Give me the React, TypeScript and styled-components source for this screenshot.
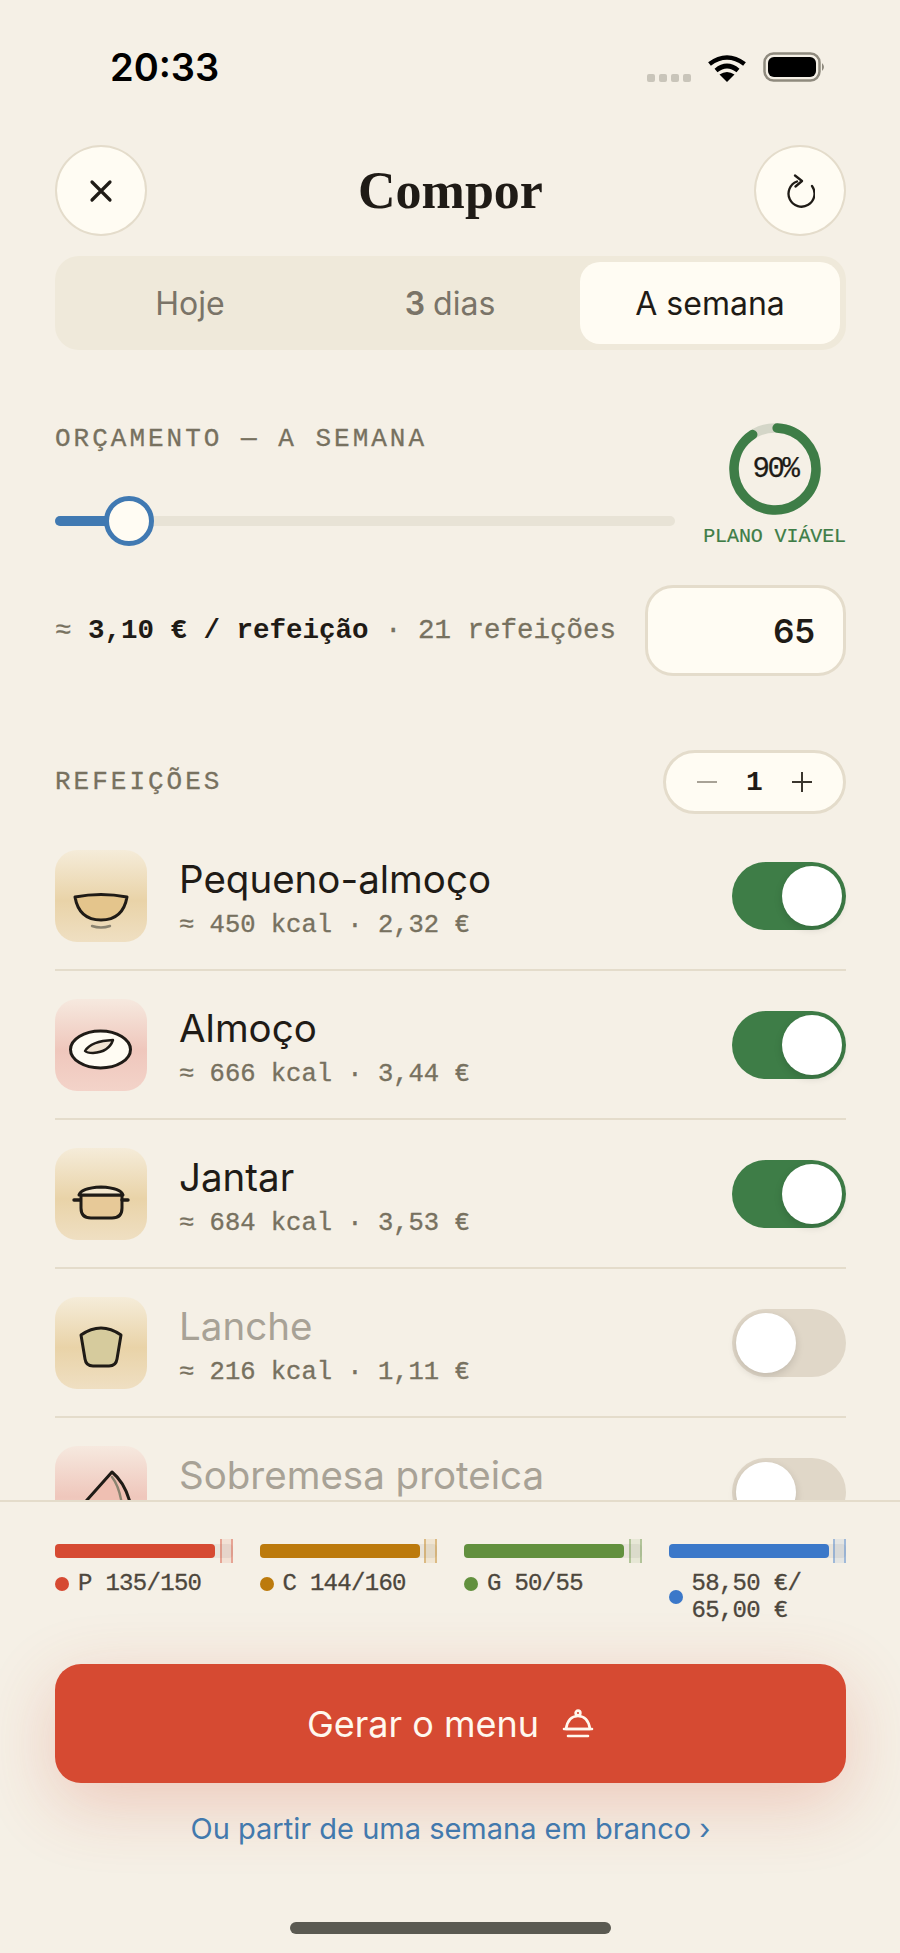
import React from "react";
import styled, { createGlobalStyle } from "styled-components";

const mono = `"Liberation Mono", "DejaVu Sans Mono", monospace`;
const sans = `Inter, "Noto Sans", sans-serif`;

const GlobalStyle = createGlobalStyle`
  html, body {
    margin: 0;
    padding: 0;
    background: #f5f0e6;
  }
  * {
    box-sizing: border-box;
  }
`;

const Screen = styled.div`
  display: flex;
  flex-direction: column;
  width: 900px;
  height: 1953px;
  overflow: hidden;
  background: #f5f0e6;
  font-family: ${sans};
  color: #1f1b16;
`;

const Scroll = styled.div`
  flex: 1;
  min-height: 0;
  overflow: hidden;
  padding: 0 54px 0 55px;
`;

const StatusBar = styled.div`
  display: flex;
  align-items: center;
  justify-content: space-between;
  height: 132px;
  padding: 2px 20px 0 55px;
`;

const Clock = styled.div`
  font-size: 38px;
  font-weight: 600;
  color: #000;
`;

const StatusIcons = styled.div`
  display: flex;
  align-items: flex-end;
  gap: 17px;
`;

const Header = styled.div`
  display: flex;
  align-items: center;
  justify-content: space-between;
  margin-top: 13px;
`;

const RoundButton = styled.div`
  display: flex;
  align-items: center;
  justify-content: center;
  width: 92px;
  height: 91px;
  border-radius: 50%;
  background: #fffcf3;
  border: 2px solid #e4dccb;
`;

const Title = styled.h1`
  margin: 0;
  font-family: "Liberation Serif", serif;
  font-size: 52px;
  font-weight: 700;
  color: #1f1b16;
`;

const Segments = styled.div`
  display: grid;
  grid-template-columns: 1fr 1fr 260px;
  height: 94px;
  margin-top: 20px;
  padding: 6px 6px 6px 5px;
  border-radius: 24px;
  background: #efe9da;
`;

const Segment = styled.div<{ $active?: boolean }>`
  display: flex;
  align-items: center;
  justify-content: center;
  border-radius: 20px;
  font-size: 32px;
  background: ${(p) => (p.$active ? "#fffcf3" : "transparent")};
  color: ${(p) => (p.$active ? "#1f1b16" : "#7a7468")};
  b {
    font-weight: 600;
    margin-right: 8px;
  }
`;

const Budget = styled.div`
  display: grid;
  grid-template-columns: 620px 1fr;
  margin-top: 76px;
`;

const BudgetLeft = styled.div`
  display: flex;
  flex-direction: column;
`;

const Label = styled.div`
  font-family: ${mono};
  font-size: 26px;
  line-height: 26px;
  letter-spacing: 3px;
  color: #77715f;
  -webkit-text-stroke: 0.3px #77715f;
`;

const Slider = styled.div`
  position: relative;
  height: 10px;
  margin-top: 64px;
  border-radius: 5px;
  background: #e8e3d6;
`;

const SliderFill = styled.div`
  width: 72px;
  height: 100%;
  border-radius: 5px 0 0 5px;
  background: #4079b2;
`;

const SliderThumb = styled.div`
  position: absolute;
  left: 49px;
  top: -20px;
  width: 50px;
  height: 50px;
  border-radius: 50%;
  background: #fffcf3;
  border: 5px solid #4079b2;
`;

const Gauge = styled.div`
  display: flex;
  flex-direction: column;
  align-items: flex-end;
  margin-top: -3px;
`;

const Ring = styled.div`
  position: relative;
  display: flex;
  align-items: center;
  justify-content: center;
  width: 92px;
  height: 92px;
  margin-right: 25px;
  font-family: ${mono};
  font-size: 29px;
  letter-spacing: -2.4px;
  color: #1f1b16;
  -webkit-text-stroke: 0.25px #1f1b16;
  svg {
    position: absolute;
    inset: 0;
  }
`;

const GaugeLabel = styled.div`
  margin-top: 10px;
  font-family: ${mono};
  font-size: 20px;
  letter-spacing: -0.1px;
  white-space: nowrap;
  color: #3e7d47;
  -webkit-text-stroke: 0.2px #3e7d47;
`;

const PriceRow = styled.div`
  display: flex;
  align-items: center;
  justify-content: space-between;
  margin-top: 37px;
`;

const PriceText = styled.div`
  font-family: ${mono};
  font-size: 27.5px;
  color: #77715f;
  white-space: nowrap;
  -webkit-text-stroke: 0.3px #77715f;
  b {
    color: #1f1b16;
    -webkit-text-stroke: 0;
  }
`;

const Amount = styled.div`
  display: flex;
  align-items: center;
  justify-content: flex-end;
  width: 201px;
  height: 91px;
  padding-right: 28px;
  border-radius: 28px;
  border: 3px solid #e4dccb;
  background: #fffcf3;
  font-size: 33px;
  font-weight: 600;
`;

const MealsHead = styled.div`
  display: flex;
  align-items: center;
  justify-content: space-between;
  margin-top: 74px;
`;

const Stepper = styled.div`
  display: flex;
  align-items: center;
  justify-content: space-between;
  width: 183px;
  height: 64px;
  padding: 0 31px;
  border-radius: 32px;
  border: 3px solid #e4dccb;
  background: #fffcf3;
  font-family: ${mono};
  font-size: 28px;
  font-weight: 700;
`;

const Meals = styled.div`
  margin-top: 8px;
`;

const Meal = styled.div`
  display: flex;
  align-items: center;
  height: 149px;
  padding: 28px 0 27px;
  border-bottom: 2px solid #e4dccb;
`;

const Tile = styled.div<{ $tone: "sand" | "rose" }>`
  display: flex;
  flex: none;
  width: 92px;
  height: 92px;
  border-radius: 22px;
  background: ${(p) =>
    p.$tone === "rose"
      ? "linear-gradient(180deg, #f6e9df 0%, #efc7bc 55%, #f3d3c9 100%)"
      : "linear-gradient(180deg, #f5ecd9 0%, #e9d3a8 55%, #efdfc2 100%)"};
`;

const MealText = styled.div`
  flex: 1;
  margin: 10px 0 0 32px;
`;

const MealName = styled.div<{ $off?: boolean }>`
  font-size: 38.5px;
  line-height: 46px;
  color: ${(p) => (p.$off ? "#a8a296" : "#1f1b16")};
`;

const MealMeta = styled.div`
  padding-top: 4px;
  font-family: ${mono};
  font-size: 25.5px;
  line-height: 40px;
  color: #77715f;
  -webkit-text-stroke: 0.35px #77715f;
`;

const Toggle = styled.div<{ $on?: boolean }>`
  display: flex;
  align-items: center;
  justify-content: ${(p) => (p.$on ? "flex-end" : "flex-start")};
  flex: none;
  width: 114px;
  height: 68px;
  padding: 0 4px;
  border-radius: 34px;
  background: ${(p) => (p.$on ? "#3e7d47" : "#e0d7c8")};
`;

const Knob = styled.div`
  width: 60px;
  height: 60px;
  border-radius: 50%;
  background: #fff;
  box-shadow: 0 3px 8px rgba(0, 0, 0, 0.14);
`;

const Footer = styled.div`
  flex: none;
  height: 453px;
  padding: 37px 54px 0 55px;
  border-top: 2px solid #e4dccb;
  background: #f5f0e6;
`;

const Macros = styled.div`
  display: grid;
  grid-template-columns: repeat(4, 1fr);
  gap: 27px;
`;

const MacroBar = styled.div`
  display: flex;
  align-items: center;
  height: 24px;
`;

const BarTrack = styled.div`
  position: relative;
  flex: 1;
  height: 14px;
  border-radius: 4px;
  background: rgba(0, 0, 0, 0.05);
`;

const BarFill = styled.div<{ $color: string }>`
  width: 160px;
  height: 100%;
  border-radius: 4px;
  background: ${(p) => p.$color};
`;

const BarTarget = styled.div<{ $color: string }>`
  position: absolute;
  right: 0;
  top: -5px;
  width: 13px;
  height: 24px;
  opacity: 0.45;
  background: ${(p) => p.$color}33;
  border-left: 2px solid ${(p) => p.$color};
  border-right: 2px solid ${(p) => p.$color};
`;

const Legend = styled.div`
  display: flex;
  align-items: center;
  gap: 9px;
  margin-top: 7px;
  font-family: ${mono};
  font-size: 24px;
  line-height: 27px;
  letter-spacing: -0.7px;
  color: #4d473d;
  -webkit-text-stroke: 0.3px #4d473d;
`;

const Dot = styled.span<{ $color: string }>`
  flex: none;
  width: 14px;
  height: 14px;
  border-radius: 50%;
  background: ${(p) => p.$color};
`;

const Cta = styled.div`
  display: flex;
  align-items: center;
  justify-content: center;
  gap: 23px;
  height: 119px;
  margin-top: 40px;
  border-radius: 26px;
  background: #d64a32;
  color: #fff8ee;
  font-size: 36px;
  box-shadow: 0 20px 70px rgba(214, 74, 50, 0.24);
`;

const BlankLink = styled.div`
  margin-top: 28px;
  text-align: center;
  font-size: 29px;
  color: #4279ad;
`;

const HomeBar = styled.div`
  width: 321px;
  height: 12px;
  margin: 76px auto 0;
  border-radius: 6px;
  background: #5b5a52;
`;

// tile drawings share one 92x92 box, so their coordinates read as offsets in the tile
const TileArt: React.FC<{ children: React.ReactNode }> = ({ children }) => (
  <svg width="92" height="92" viewBox="0 0 92 92" fill="none" stroke="#1f1b16" strokeWidth="3" strokeLinecap="round" strokeLinejoin="round">
    {children}
  </svg>
);

const Bowl = () => (
  <TileArt>
    <path d="M20 47 Q46 42 72 47 Q68 70 46 70 Q24 70 20 47Z" fill="#e4c58c" />
    <path d="M37 76 Q46 79 55 76" stroke="#8a8370" strokeWidth="2.4" />
  </TileArt>
);

const Plate = () => (
  <TileArt>
    <ellipse cx="45.5" cy="50.5" rx="30" ry="18.5" fill="#fffcf3" />
    <path d="M30 52 Q36 42 58 41 Q54 53 38 54 Q32 54 30 52Z" fill="#f2e4d2" strokeWidth="2.4" />
  </TileArt>
);

const Pot = () => (
  <TileArt>
    <path d="M26 47 V60 Q26 70 36 70 H57 Q67 70 67 60 V47Z" fill="#e7c998" />
    <path d="M24 47 Q26 40 46 39 Q66 40 68 47Z" fill="#f3e7cf" />
    <path d="M19 52 H25 M67 52 H73" strokeWidth="3.4" />
  </TileArt>
);

const Cup = () => (
  <TileArt>
    <path d="M26 38 Q46 24 66 38 L62 62 Q61 69 54 69 H38 Q31 69 30 62Z" fill="#d6cb9d" />
  </TileArt>
);

const Slice = () => (
  <TileArt>
    <path d="M16 72 L57 26 Q74 40 78 72Z" fill="#efbfb2" />
    <path d="M57 31 Q67 44 68 72" stroke="#8a8370" strokeWidth="2.4" />
  </TileArt>
);

const meals = [
  { name: "Pequeno-almoço", meta: "≈ 450 kcal · 2,32 €", tone: "sand", icon: <Bowl />, on: true },
  { name: "Almoço", meta: "≈ 666 kcal · 3,44 €", tone: "rose", icon: <Plate />, on: true },
  { name: "Jantar", meta: "≈ 684 kcal · 3,53 €", tone: "sand", icon: <Pot />, on: true },
  { name: "Lanche", meta: "≈ 216 kcal · 1,11 €", tone: "sand", icon: <Cup />, on: false },
  { name: "Sobremesa proteica", meta: "", tone: "rose", icon: <Slice />, on: false },
] as const;

const macros = [
  { label: "P 135/150", color: "#d64a32" },
  { label: "C 144/160", color: "#bc7a0c" },
  { label: "G 50/55", color: "#62903e" },
  { label: "58,50 €/ 65,00 €", color: "#3b78c9" },
];

const App: React.FC = () => {
  return (
    <Screen>
      <GlobalStyle />
      <Scroll>
        <StatusBar>
          <Clock>20:33</Clock>
          <StatusIcons>
            <svg width="44" height="8" viewBox="0 0 44 8" fill="#c9c5ba">
              <rect x="0" y="0" width="8" height="8" rx="2" />
              <rect x="12" y="0" width="8" height="8" rx="2" />
              <rect x="24" y="0" width="8" height="8" rx="2" />
              <rect x="36" y="0" width="8" height="8" rx="2" />
            </svg>
            <svg width="38" height="28" viewBox="0 0 38 28" fill="none" stroke="#000" strokeWidth="4.6">
              <path d="M1.5 10 Q19 -3 36.5 10" />
              <path d="M8 16.5 Q19 7.5 30 16.5" />
              <path d="M19 28 L11.5 20.5 Q19 15.5 26.5 20.5Z" fill="#000" stroke="none" />
            </svg>
            <svg width="63" height="30" viewBox="0 0 63 30" fill="none">
              <rect x="1.5" y="1.5" width="55" height="27" rx="9" stroke="#8f8a7e" strokeWidth="2.5" />
              <rect x="5" y="5" width="48" height="20" rx="6" fill="#000" />
              <path d="M59 11 Q63 15 59 19Z" fill="#8f8a7e" />
            </svg>
          </StatusIcons>
        </StatusBar>

        <Header>
          <RoundButton>
            <svg width="24" height="24" viewBox="0 0 24 24" stroke="#1f1b16" strokeWidth="3.2" strokeLinecap="round">
              <path d="M3 3 L21 21 M21 3 L3 21" />
            </svg>
          </RoundButton>
          <Title>Compor</Title>
          <RoundButton>
            <svg width="30" height="34" viewBox="0 0 30 34" fill="none" stroke="#1f1b16" strokeWidth="2.3" strokeLinecap="round" strokeLinejoin="round">
              <path d="M12 7.5 A13 13 0 1 0 27 12" />
              <path d="M10 1.5 L17 7 L10.5 12.5" />
            </svg>
          </RoundButton>
        </Header>

        <Segments>
          <Segment>Hoje</Segment>
          <Segment>
            <b>3</b>dias
          </Segment>
          <Segment $active>A semana</Segment>
        </Segments>

        <Budget>
          <BudgetLeft>
            <Label>ORÇAMENTO — A SEMANA</Label>
            <Slider>
              <SliderFill />
              <SliderThumb />
            </Slider>
          </BudgetLeft>
          <Gauge>
            <Ring>
              <svg width="92" height="92" viewBox="0 0 92 92" fill="none" strokeWidth="9.5">
                <circle cx="46" cy="46" r="41" stroke="#d4d6c8" />
                <circle
                  cx="46"
                  cy="46"
                  r="41"
                  stroke="#3e7d47"
                  strokeLinecap="round"
                  pathLength="100"
                  strokeDasharray="90 100"
                  transform="rotate(-87 46 46)"
                />
              </svg>
              90%
            </Ring>
            <GaugeLabel>PLANO VIÁVEL</GaugeLabel>
          </Gauge>
        </Budget>

        <PriceRow>
          <PriceText>
            ≈ <b>3,10 € / refeição</b> · 21 refeições
          </PriceText>
          <Amount>65</Amount>
        </PriceRow>

        <MealsHead>
          <Label>REFEIÇÕES</Label>
          <Stepper>
            <svg width="20" height="4" viewBox="0 0 20 4" stroke="#a8a296" strokeWidth="2">
              <path d="M0 2 H20" />
            </svg>
            1
            <svg width="20" height="20" viewBox="0 0 20 20" stroke="#3a352d" strokeWidth="2">
              <path d="M0 10 H20 M10 0 V20" />
            </svg>
          </Stepper>
        </MealsHead>

        <Meals>
          {meals.map((m) => (
            <Meal key={m.name}>
              <Tile $tone={m.tone}>{m.icon}</Tile>
              <MealText>
                <MealName $off={!m.on}>{m.name}</MealName>
                <MealMeta>{m.meta || "\u00a0"}</MealMeta>
              </MealText>
              <Toggle $on={m.on}>
                <Knob />
              </Toggle>
            </Meal>
          ))}
        </Meals>
      </Scroll>

      <Footer>
        <Macros>
          {macros.map((m) => (
            <div key={m.label}>
              <MacroBar>
                <BarTrack>
                  <BarFill $color={m.color} />
                  <BarTarget $color={m.color} />
                </BarTrack>
              </MacroBar>
              <Legend>
                <Dot $color={m.color} />
                <span>{m.label}</span>
              </Legend>
            </div>
          ))}
        </Macros>
        <Cta>
          Gerar o menu
          <svg width="32" height="30" viewBox="0 0 32 30" fill="none" stroke="#fff8ee" strokeWidth="2.6" strokeLinecap="round" strokeLinejoin="round">
            <circle cx="16" cy="4" r="2.4" />
            <path d="M4 20 Q6 7 16 7 Q26 7 28 20Z" />
            <path d="M2 20 H30 M6 27 H26" />
          </svg>
        </Cta>
        <BlankLink>Ou partir de uma semana em branco ›</BlankLink>
        <HomeBar />
      </Footer>
    </Screen>
  );
};

export default App;
